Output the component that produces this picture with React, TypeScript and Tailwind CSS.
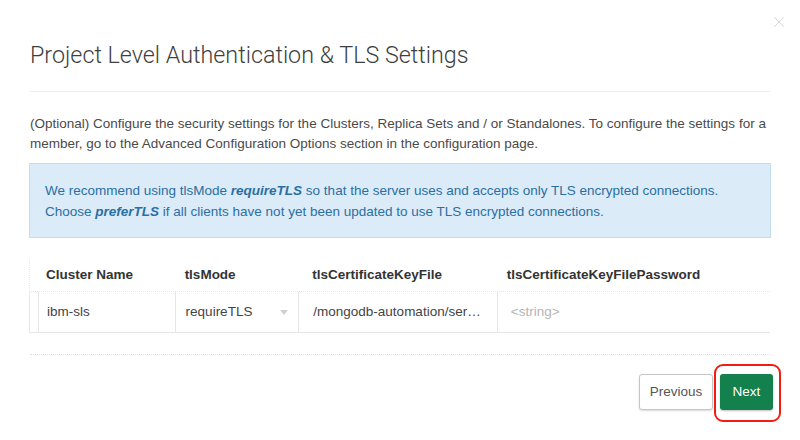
import { X } from "lucide-react";

const font = { fontFamily: '"Liberation Sans", Arial, sans-serif' };
const titleFont = { fontFamily: 'Roboto, "Liberation Sans", Arial, sans-serif' };

export default function App() {
    return (
        <div className="relative w-[800px] h-[440px] bg-white text-[#494949] overflow-hidden" style={font}>
            {/* close */}
            <button className="absolute top-[13px] right-[12px] text-[#cfcfcf]">
                <X className="h-[18px] w-[18px]" strokeWidth={1.1} />
            </button>

            <div className="px-[30px] pt-[41px]">
                <h1 className="text-[23.3px] leading-[28px] font-light text-[#3f3f3f] pb-[22px] border-b border-[#ececec]" style={titleFont}>
                    Project Level Authentication &amp; TLS Settings
                </h1>

                <p className="mt-[22px] text-[13.5px] leading-[20px] text-[#4a4a4a]">
                    (Optional) Configure the security settings for the Clusters, Replica Sets and / or Standalones. To configure the settings for a member, go to the Advanced Configuration Options section in the configuration page.
                </p>

                <div className="mt-[9px] -mx-px px-[15px] pt-[16px] pb-[15px] bg-[#dcebf8] border border-[#c3ddf1] text-[13.5px] leading-[21px] text-[#2a6fa3]">
                    <div>
                        We recommend using tlsMode <b><i>requireTLS</i></b> so that the server uses and accepts only TLS encrypted connections.
                    </div>
                    <div>
                        Choose <b><i>preferTLS</i></b> if all clients have not yet been updated to use TLS encrypted connections.
                    </div>
                </div>

                {/* table */}
                <div className="mt-[21px] -ml-px text-[13.5px]">
                    <div className="flex h-[33px] items-center border-l border-[#e6e6e6] border-b border-dotted font-bold text-[#333]">
                        <div className="w-[145px] pl-[16px]">Cluster Name</div>
                        <div className="w-[124px] pl-[10px]">tlsMode</div>
                        <div className="w-[199px] pl-[14px]">tlsCertificateKeyFile</div>
                        <div className="w-[274px] pl-[10px]">tlsCertificateKeyFilePassword</div>
                    </div>
                    <div className="flex h-[41px] border-l border-b border-[#e6e6e6] text-[#444]">
                        <div className="w-[8px]"></div>
                        <div className="w-[137px] pl-[8px] flex items-center border-l border-[#e6e6e6]">ibm-sls</div>
                        <div className="w-[124px] pl-[10px] pr-[10px] flex items-center justify-between border-l border-[#e6e6e6]">
                            <span>requireTLS</span>
                            <span className="w-0 h-0 border-l-[4px] border-r-[4px] border-t-[5px] border-l-transparent border-r-transparent border-t-[#d0d0d0]"></span>
                        </div>
                        <div className="w-[199px] pl-[14px] flex items-center border-l border-[#e6e6e6] whitespace-nowrap">
                            /mongodb-automation/ser…
                        </div>
                        <div className="w-[274px] pl-[13px] flex items-center border-l border-[#e6e6e6] text-[#b5b5b5]">
                            &lt;string&gt;
                        </div>
                    </div>
                </div>

                <div className="mt-[21px] border-t border-dotted border-[#e0e0e0]"></div>

                <div className="mt-[19px] flex justify-end gap-[7px] -mr-[3px]">
                    <button className="h-[36px] w-[74px] border border-[#c5c5c5] rounded-[3px] bg-white text-[13.5px] text-[#555] shadow-[0_1px_2px_rgba(0,0,0,0.15)]">
                        Previous
                    </button>
                    <div className="relative">
                        <button className="h-[36px] w-[53px] rounded-[3px] bg-[#13804e] text-[13.5px] text-white shadow-[0_1px_2px_rgba(0,0,0,0.25)]">
                            Next
                        </button>
                        <div className="absolute -top-[10px] -bottom-[12px] -left-[6px] -right-[8px] border-2 border-[#f01e12] rounded-[9px] pointer-events-none"></div>
                    </div>
                </div>
            </div>
        </div>
    );
}
